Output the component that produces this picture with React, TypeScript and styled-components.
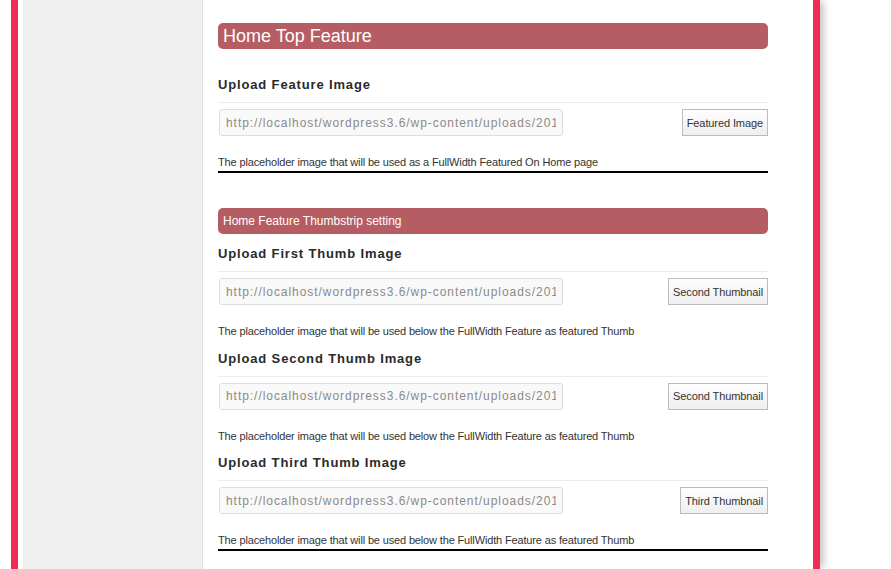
import React from "react";
import styled, { createGlobalStyle } from "styled-components";

const GlobalStyle = createGlobalStyle`
  html, body { margin: 0; padding: 0; background: #ffffff; }
  body { font-family: "Liberation Sans", Arial, sans-serif; overflow: hidden; }
`;

const Page = styled.div`
  display: flex;
  height: 569px;
  padding-left: 11px;
  background: #ffffff;
`;

const Frame = styled.div`
  display: flex;
  width: 790px;
  border-left: 7px solid #f22a56;
  border-right: 7px solid #f22a56;
  padding-left: 5px;
  background: #ffffff;
  box-shadow: 5px 0 7px -1px rgba(0, 0, 0, 0.22);
  box-sizing: content-box;
`;

const Sidebar = styled.aside`
  width: 179px;
  flex: none;
  background: #f0f0f0;
  border-right: 1px solid #e2e2e2;
`;

const Main = styled.main`
  flex: 1;
  padding: 23px 45px 0 15px;
  display: flex;
  flex-direction: column;
`;

const SectionBar = styled.div<{ $big?: boolean }>`
  height: 26px;
  display: flex;
  align-items: center;
  padding-left: 5px;
  background: #b55d62;
  border-radius: 5px;
  color: #ffffff;
  font-size: ${(p) => (p.$big ? "18px" : "12px")};
  margin-top: ${(p) => (p.$big ? "0" : "35px")};
  margin-bottom: ${(p) => (p.$big ? "27px" : "11px")};
`;

const Field = styled.div<{ $first?: boolean }>`
  margin-top: ${(p) => (p.$first ? "0" : "11.5px")};
`;

const FieldTitle = styled.h3`
  margin: 0;
  font-size: 13px;
  font-weight: bold;
  letter-spacing: 0.85px;
  line-height: 18px;
  color: #2a2a2a;
  padding-bottom: 8px;
  border-bottom: 1px solid #ececec;
`;

const Row = styled.div`
  margin-top: 6px;
  display: flex;
  justify-content: space-between;
  align-items: center;
`;

const UrlInput = styled.input`
  width: 344px;
  height: 27px;
  margin-left: 1px;
  box-sizing: border-box;
  border: 1px solid #dedede;
  border-radius: 3px;
  background: #f9f9f9;
  padding: 0 6px;
  font-family: "Liberation Sans", Arial, sans-serif;
  font-size: 12px;
  letter-spacing: 0.95px;
  color: #8a8a8a;
  outline: none;
`;

const UploadButton = styled.button`
  height: 27px;
  box-sizing: border-box;
  padding: 0 4px;
  border: 1px solid #bbbbbb;
  border-radius: 0;
  background: linear-gradient(#fefefe, #efefef);
  font-family: "Liberation Sans", Arial, sans-serif;
  font-size: 11px;
  letter-spacing: -0.1px;
  color: #333333;
`;

const Description = styled.p<{ $rule?: boolean }>`
  margin: 19px 0 0 0;
  font-size: 11px;
  line-height: 14px;
  letter-spacing: -0.15px;
  color: #333333;
  padding-bottom: ${(p) => (p.$rule ? "2px" : "0")};
  border-bottom: ${(p) => (p.$rule ? "2px solid #000000" : "none")};
`;

const url = "http://localhost/wordpress3.6/wp-content/uploads/201";

type FieldProps = {
  title: string;
  button: string;
  desc: string;
  first?: boolean;
  rule?: boolean;
};

function UploadField({ title, button, desc, first, rule }: FieldProps) {
  return (
    <Field $first={first}>
      <FieldTitle>{title}</FieldTitle>
      <Row>
        <UrlInput type="text" defaultValue={url} readOnly />
        <UploadButton type="button">{button}</UploadButton>
      </Row>
      <Description $rule={rule}>{desc}</Description>
    </Field>
  );
}

const thumbDesc =
  "The placeholder image that will be used below the FullWidth Feature as featured Thumb";

export default function App() {
  return (
    <>
      <GlobalStyle />
      <Page>
        <Frame>
          <Sidebar />
          <Main>
            <SectionBar $big>Home Top Feature</SectionBar>
            <UploadField
              first
              rule
              title="Upload Feature Image"
              button="Featured Image"
              desc="The placeholder image that will be used as a FullWidth Featured On Home page"
            />
            <SectionBar>Home Feature Thumbstrip setting</SectionBar>
            <UploadField
              first
              title="Upload First Thumb Image"
              button="Second Thumbnail"
              desc={thumbDesc}
            />
            <UploadField
              title="Upload Second Thumb Image"
              button="Second Thumbnail"
              desc={thumbDesc}
            />
            <UploadField
              rule
              title="Upload Third Thumb Image"
              button="Third Thumbnail"
              desc={thumbDesc}
            />
          </Main>
        </Frame>
      </Page>
    </>
  );
}
